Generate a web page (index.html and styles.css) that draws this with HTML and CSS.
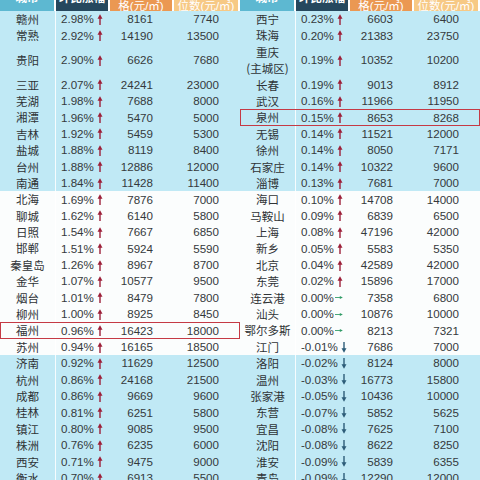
FILE: index.html
```html
<!DOCTYPE html>
<html lang="zh">
<head>
<meta charset="utf-8">
<link rel="stylesheet" href="styles.css">
</head>
<body>
<svg width="0" height="0" class="defs">
  <defs>
    <symbol id="a-up" viewBox="0 0 6 11"><path d="M3 11V3.5" stroke="currentColor" stroke-width="1.4"/><path d="M0.5 4.8L3 0.3L5.5 4.8Z" fill="currentColor"/></symbol>
    <symbol id="a-dn" viewBox="0 0 6 11"><path d="M3 0V7.5" stroke="currentColor" stroke-width="1.4"/><path d="M0.5 6.2L3 10.7L5.5 6.2Z" fill="currentColor"/></symbol>
    <symbol id="a-rt" viewBox="0 0 11 6"><path d="M0 3H7.5" stroke="currentColor" stroke-width="1.2"/><path d="M6.6 0.9L10.8 3L6.6 5.1Z" fill="currentColor"/></symbol>
  </defs>
</svg>
<div class="sheet">
  <div class="half">
    <div class="head">
      <div class="h h1"><span class="cut">城市</span></div>
      <div class="h h2"><span class="cut">环比涨幅</span></div>
      <div class="h h3"><span>格(元/㎡)</span></div>
      <div class="h h4"><span>位数(元/㎡)</span></div>
    </div>
    <div class="row blue"><span class="city">赣州</span><span class="pct">2.98%<svg class="ar up"><use href="#a-up"/></svg></span><span class="num">8161</span><span class="num">7740</span></div>
    <div class="row blue"><span class="city">常熟</span><span class="pct">2.92%<svg class="ar up"><use href="#a-up"/></svg></span><span class="num">14190</span><span class="num">13500</span></div>
    <div class="row blue tall"><span class="city">贵阳</span><span class="pct">2.90%<svg class="ar up"><use href="#a-up"/></svg></span><span class="num">6626</span><span class="num">7680</span></div>
    <div class="row blue"><span class="city">三亚</span><span class="pct">2.07%<svg class="ar up"><use href="#a-up"/></svg></span><span class="num">24241</span><span class="num">23000</span></div>
    <div class="row blue"><span class="city">芜湖</span><span class="pct">1.98%<svg class="ar up"><use href="#a-up"/></svg></span><span class="num">7688</span><span class="num">8000</span></div>
    <div class="row blue"><span class="city">湘潭</span><span class="pct">1.96%<svg class="ar up"><use href="#a-up"/></svg></span><span class="num">5470</span><span class="num">5000</span></div>
    <div class="row blue"><span class="city">吉林</span><span class="pct">1.92%<svg class="ar up"><use href="#a-up"/></svg></span><span class="num">5459</span><span class="num">5300</span></div>
    <div class="row blue"><span class="city">盐城</span><span class="pct">1.88%<svg class="ar up"><use href="#a-up"/></svg></span><span class="num">8119</span><span class="num">8400</span></div>
    <div class="row blue"><span class="city">台州</span><span class="pct">1.88%<svg class="ar up"><use href="#a-up"/></svg></span><span class="num">12886</span><span class="num">12000</span></div>
    <div class="row blue"><span class="city">南通</span><span class="pct">1.84%<svg class="ar up"><use href="#a-up"/></svg></span><span class="num">11428</span><span class="num">11400</span></div>
    <div class="row white"><span class="city">北海</span><span class="pct">1.69%<svg class="ar up"><use href="#a-up"/></svg></span><span class="num">7876</span><span class="num">7000</span></div>
    <div class="row white"><span class="city">聊城</span><span class="pct">1.62%<svg class="ar up"><use href="#a-up"/></svg></span><span class="num">6140</span><span class="num">5800</span></div>
    <div class="row white"><span class="city">日照</span><span class="pct">1.54%<svg class="ar up"><use href="#a-up"/></svg></span><span class="num">7667</span><span class="num">6850</span></div>
    <div class="row white"><span class="city">邯郸</span><span class="pct">1.51%<svg class="ar up"><use href="#a-up"/></svg></span><span class="num">5924</span><span class="num">5590</span></div>
    <div class="row white"><span class="city">秦皇岛</span><span class="pct">1.26%<svg class="ar up"><use href="#a-up"/></svg></span><span class="num">8967</span><span class="num">8700</span></div>
    <div class="row white"><span class="city">金华</span><span class="pct">1.07%<svg class="ar up"><use href="#a-up"/></svg></span><span class="num">10577</span><span class="num">9500</span></div>
    <div class="row white"><span class="city">烟台</span><span class="pct">1.01%<svg class="ar up"><use href="#a-up"/></svg></span><span class="num">8479</span><span class="num">7800</span></div>
    <div class="row white"><span class="city">柳州</span><span class="pct">1.00%<svg class="ar up"><use href="#a-up"/></svg></span><span class="num">8925</span><span class="num">8450</span></div>
    <div class="row white mark"><span class="city">福州</span><span class="pct">0.96%<svg class="ar up"><use href="#a-up"/></svg></span><span class="num">16423</span><span class="num">18000</span></div>
    <div class="row white"><span class="city">苏州</span><span class="pct">0.94%<svg class="ar up"><use href="#a-up"/></svg></span><span class="num">16165</span><span class="num">18500</span></div>
    <div class="row blue"><span class="city">济南</span><span class="pct">0.92%<svg class="ar up"><use href="#a-up"/></svg></span><span class="num">11629</span><span class="num">12500</span></div>
    <div class="row blue"><span class="city">杭州</span><span class="pct">0.86%<svg class="ar up"><use href="#a-up"/></svg></span><span class="num">24168</span><span class="num">21500</span></div>
    <div class="row blue"><span class="city">成都</span><span class="pct">0.86%<svg class="ar up"><use href="#a-up"/></svg></span><span class="num">9669</span><span class="num">9600</span></div>
    <div class="row blue"><span class="city">桂林</span><span class="pct">0.81%<svg class="ar up"><use href="#a-up"/></svg></span><span class="num">6251</span><span class="num">5800</span></div>
    <div class="row blue"><span class="city">镇江</span><span class="pct">0.80%<svg class="ar up"><use href="#a-up"/></svg></span><span class="num">9085</span><span class="num">9500</span></div>
    <div class="row blue"><span class="city">株洲</span><span class="pct">0.76%<svg class="ar up"><use href="#a-up"/></svg></span><span class="num">6235</span><span class="num">6000</span></div>
    <div class="row blue"><span class="city">西安</span><span class="pct">0.71%<svg class="ar up"><use href="#a-up"/></svg></span><span class="num">9475</span><span class="num">9000</span></div>
    <div class="row blue"><span class="city">衡水</span><span class="pct">0.70%<svg class="ar up"><use href="#a-up"/></svg></span><span class="num">6913</span><span class="num">5500</span></div>
  </div>
  <div class="half">
    <div class="head">
      <div class="h h1"><span class="cut">城市</span></div>
      <div class="h h2"><span class="cut">环比涨幅</span></div>
      <div class="h h3"><span>格(元/㎡)</span></div>
      <div class="h h4"><span>位数(元/㎡)</span></div>
    </div>
    <div class="row blue"><span class="city">西宁</span><span class="pct">0.23%<svg class="ar up"><use href="#a-up"/></svg></span><span class="num">6603</span><span class="num">6400</span></div>
    <div class="row blue"><span class="city">珠海</span><span class="pct">0.20%<svg class="ar up"><use href="#a-up"/></svg></span><span class="num">21383</span><span class="num">23750</span></div>
    <div class="row blue tall"><span class="city">重庆<br>(主城区)</span><span class="pct">0.19%<svg class="ar up"><use href="#a-up"/></svg></span><span class="num">10352</span><span class="num">10200</span></div>
    <div class="row blue"><span class="city">长春</span><span class="pct">0.19%<svg class="ar up"><use href="#a-up"/></svg></span><span class="num">9013</span><span class="num">8912</span></div>
    <div class="row blue"><span class="city">武汉</span><span class="pct">0.16%<svg class="ar up"><use href="#a-up"/></svg></span><span class="num">11966</span><span class="num">11950</span></div>
    <div class="row blue mark"><span class="city">泉州</span><span class="pct">0.15%<svg class="ar up"><use href="#a-up"/></svg></span><span class="num">8653</span><span class="num">8268</span></div>
    <div class="row blue"><span class="city">无锡</span><span class="pct">0.14%<svg class="ar up"><use href="#a-up"/></svg></span><span class="num">11521</span><span class="num">12000</span></div>
    <div class="row blue"><span class="city">徐州</span><span class="pct">0.14%<svg class="ar up"><use href="#a-up"/></svg></span><span class="num">8050</span><span class="num">7171</span></div>
    <div class="row blue"><span class="city">石家庄</span><span class="pct">0.14%<svg class="ar up"><use href="#a-up"/></svg></span><span class="num">10322</span><span class="num">9600</span></div>
    <div class="row blue"><span class="city">淄博</span><span class="pct">0.13%<svg class="ar up"><use href="#a-up"/></svg></span><span class="num">7681</span><span class="num">7000</span></div>
    <div class="row white"><span class="city">海口</span><span class="pct">0.10%<svg class="ar up"><use href="#a-up"/></svg></span><span class="num">14708</span><span class="num">14000</span></div>
    <div class="row white"><span class="city">马鞍山</span><span class="pct">0.09%<svg class="ar up"><use href="#a-up"/></svg></span><span class="num">6839</span><span class="num">6500</span></div>
    <div class="row white"><span class="city">上海</span><span class="pct">0.08%<svg class="ar up"><use href="#a-up"/></svg></span><span class="num">47196</span><span class="num">42000</span></div>
    <div class="row white"><span class="city">新乡</span><span class="pct">0.05%<svg class="ar up"><use href="#a-up"/></svg></span><span class="num">5583</span><span class="num">5350</span></div>
    <div class="row white"><span class="city">北京</span><span class="pct">0.04%<svg class="ar up"><use href="#a-up"/></svg></span><span class="num">42589</span><span class="num">42000</span></div>
    <div class="row white"><span class="city">东莞</span><span class="pct">0.02%<svg class="ar up"><use href="#a-up"/></svg></span><span class="num">15896</span><span class="num">17000</span></div>
    <div class="row white"><span class="city">连云港</span><span class="pct">0.00%<svg class="ar rt"><use href="#a-rt"/></svg></span><span class="num">7358</span><span class="num">6800</span></div>
    <div class="row white"><span class="city">汕头</span><span class="pct">0.00%<svg class="ar rt"><use href="#a-rt"/></svg></span><span class="num">10876</span><span class="num">10000</span></div>
    <div class="row white"><span class="city">鄂尔多斯</span><span class="pct">0.00%<svg class="ar rt"><use href="#a-rt"/></svg></span><span class="num">8213</span><span class="num">7321</span></div>
    <div class="row white"><span class="city">江门</span><span class="pct">-0.01%<svg class="ar dn"><use href="#a-dn"/></svg></span><span class="num">7686</span><span class="num">7000</span></div>
    <div class="row blue"><span class="city">洛阳</span><span class="pct">-0.02%<svg class="ar dn"><use href="#a-dn"/></svg></span><span class="num">8124</span><span class="num">8000</span></div>
    <div class="row blue"><span class="city">温州</span><span class="pct">-0.03%<svg class="ar dn"><use href="#a-dn"/></svg></span><span class="num">16773</span><span class="num">15800</span></div>
    <div class="row blue"><span class="city">张家港</span><span class="pct">-0.05%<svg class="ar dn"><use href="#a-dn"/></svg></span><span class="num">10436</span><span class="num">10000</span></div>
    <div class="row blue"><span class="city">东营</span><span class="pct">-0.07%<svg class="ar dn"><use href="#a-dn"/></svg></span><span class="num">5852</span><span class="num">5625</span></div>
    <div class="row blue"><span class="city">宜昌</span><span class="pct">-0.08%<svg class="ar dn"><use href="#a-dn"/></svg></span><span class="num">7625</span><span class="num">7100</span></div>
    <div class="row blue"><span class="city">沈阳</span><span class="pct">-0.08%<svg class="ar dn"><use href="#a-dn"/></svg></span><span class="num">8622</span><span class="num">8250</span></div>
    <div class="row blue"><span class="city">淮安</span><span class="pct">-0.09%<svg class="ar dn"><use href="#a-dn"/></svg></span><span class="num">5839</span><span class="num">6355</span></div>
    <div class="row blue"><span class="city">青岛</span><span class="pct">-0.09%<svg class="ar dn"><use href="#a-dn"/></svg></span><span class="num">12290</span><span class="num">12000</span></div>
  </div>
</div>
</body>
</html>
```
FILE: styles.css
```css
html, body {
  margin: 0;
  padding: 0;
  background: #ffffff;
}
body {
  width: 480px;
  height: 480px;
  overflow: hidden;
  font-family: "Liberation Sans", "Noto Sans CJK SC", sans-serif;
  color: #35393c;
}
.defs {
  position: absolute;
  width: 0;
  height: 0;
}
.sheet {
  display: grid;
  grid-template-columns: 240px 240px;
}
.half {
  display: flex;
  flex-direction: column;
}
.head {
  display: grid;
  grid-template-columns: 56px 54px 64px 66px;
  height: 11px;
  overflow: hidden;
}
.h {
  display: flex;
  align-items: flex-end;
  justify-content: center;
  border-right: 2px solid #ffffff;
  color: #ffffff;
  font-size: 11.5px;
  line-height: 12px;
  overflow: hidden;
}
.h span {
  margin-bottom: -1px;
  white-space: nowrap;
}
.h .cut {
  margin-bottom: 7px;
  font-weight: bold;
}
.h1 { background: #5db8d1; }
.h2 { background: #26485e; }
.h3 { background: #eb9852; }
.h4 { background: #f7c985; }
.row {
  display: grid;
  grid-template-columns: 56px 54px 64px 66px;
  height: 16.4px;
  align-items: center;
  font-size: 11.6px;
  line-height: 12px;
}
.row.tall { height: 32.8px; }
.blue { background: #c0e9f5; }
.white { background: #fbfdfd; }
.row.mark {
  outline: 1.6px solid #c53a45;
  outline-offset: -1.5px;
}
.city {
  align-self: stretch;
  display: flex;
  align-items: center;
  justify-content: center;
  text-align: center;
  border-right: 1px solid rgba(255, 255, 255, 0.85);
  font-family: "Noto Sans CJK SC", sans-serif;
  font-size: 11.5px;
  line-height: 16.4px;
  color: #2f3336;
  white-space: nowrap;
}
.pct {
  display: flex;
  align-items: center;
  padding-left: 5px;
  white-space: nowrap;
}
.num {
  text-align: right;
  padding-right: 21px;
}
.ar {
  flex: none;
  margin-left: 3px;
}
.ar.up { width: 6px; height: 11px; color: #9c1f38; }
.ar.dn { width: 6px; height: 11px; color: #2d5c78; }
.ar.rt { width: 8px; height: 5px; color: #2f9b66; margin-left: 1px; }
```
